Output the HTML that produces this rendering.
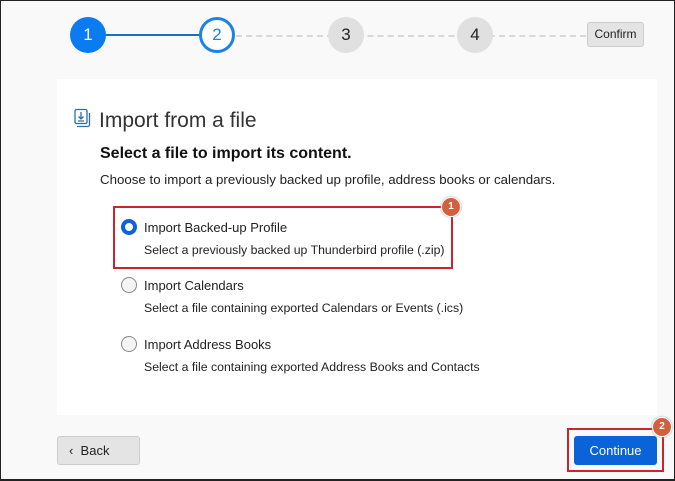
<!DOCTYPE html>
<html><head><style>
*{box-sizing:border-box;margin:0;padding:0}
body{width:675px;height:481px;background:#f9f9f9;font-family:"Liberation Sans",sans-serif;position:relative;overflow:hidden;border:1px solid #222;border-bottom:2px solid #222}
.a{position:absolute}
.c{position:absolute;width:36px;height:36px;border-radius:50%;text-align:center;line-height:36px;font-size:17px;top:16px}
.t{color:#222;font-size:13px}
.s{color:#222;font-size:12.3px}
.r{position:absolute;width:16px;height:16px;border-radius:50%;border:1px solid #888;background:#f4f4f4}
.b{position:absolute;width:20px;height:20px;border-radius:50%;background:#d2603e;color:#fff;font-size:10px;font-weight:bold;text-align:center;line-height:18px;border:1px solid #fff;box-shadow:0 0 2px #999}
</style></head><body>
<div class="a" style="left:104px;top:33px;width:95px;height:2px;background:#1b73b5"></div>
<div class="a" style="left:235px;top:34px;width:350px;border-top:2px dashed #d8d8d8"></div>
<div class="c" style="left:69px;background:#0a7bf0;color:#fff">1</div>
<div class="c" style="left:198px;background:#fff;border:3px solid #1a83e6;color:#1a83e6;line-height:30px">2</div>
<div class="c" style="left:327px;background:#e0e0e0;color:#222">3</div>
<div class="c" style="left:456px;background:#e0e0e0;color:#222">4</div>
<div class="a" style="left:586px;top:21px;width:57px;height:25px;background:#e4e4e4;border:1px solid #ccc;border-radius:3px;font-size:12px;text-align:center;line-height:23px;color:#222">Confirm</div>
<div class="a" style="left:56px;top:78px;width:600px;height:336px;background:#fff"></div>
<svg class="a" style="left:71px;top:107px" width="20" height="20" viewBox="0 0 20 20" fill="none" stroke="#2d6ea8" stroke-width="1.3"><rect x="3" y="1.5" width="12" height="14" rx="1.5"/><path d="M5 18.5h10.5a2 2 0 0 0 2-2V5"/><path d="M9 4v7M6.5 8.5L9 11l2.5-2.5M6 13h6"/></svg>
<div class="a" style="left:98px;top:108px;font-size:21px;color:#333;font-weight:300">Import from a file</div>
<div class="a" style="left:99px;top:144px;font-size:16px;font-weight:bold;color:#111">Select a file to import its content.</div>
<div class="a t" style="left:99px;top:171px;font-size:13.3px">Choose to import a previously backed up profile, address books or calendars.</div>
<div class="r" style="left:120px;top:218px;border:4.5px solid #0a63d8;background:#fff"></div>
<div class="a t" style="left:143px;top:219px">Import Backed-up Profile</div>
<div class="a s" style="left:143px;top:242px">Select a previously backed up Thunderbird profile (.zip)</div>
<div class="r" style="left:120px;top:276px"></div>
<div class="a t" style="left:143px;top:277px">Import Calendars</div>
<div class="a s" style="left:143px;top:300px">Select a file containing exported Calendars or Events (.ics)</div>
<div class="r" style="left:120px;top:335px"></div>
<div class="a t" style="left:143px;top:336px">Import Address Books</div>
<div class="a s" style="left:143px;top:359px">Select a file containing exported Address Books and Contacts</div>
<div class="a" style="left:112px;top:205px;width:340px;height:63px;border:2px solid #c8262d"></div>
<div class="b" style="left:440px;top:196px">1</div>
<div class="a" style="left:56px;top:435px;width:83px;height:29px;background:#e4e4e4;border:1px solid #ccc;border-radius:3px;font-size:13px;line-height:27px;color:#222;padding-left:11px">&lsaquo;&nbsp;&nbsp;Back</div>
<div class="a" style="left:566px;top:427px;width:97px;height:44px;border:2px solid #c8262d"></div>
<div class="a" style="left:573px;top:435px;width:83px;height:29px;background:#0a63d8;border-radius:3px;font-size:13px;line-height:29px;color:#fff;text-align:center">Continue</div>
<div class="b" style="left:651px;top:416px">2</div>
</body></html>
